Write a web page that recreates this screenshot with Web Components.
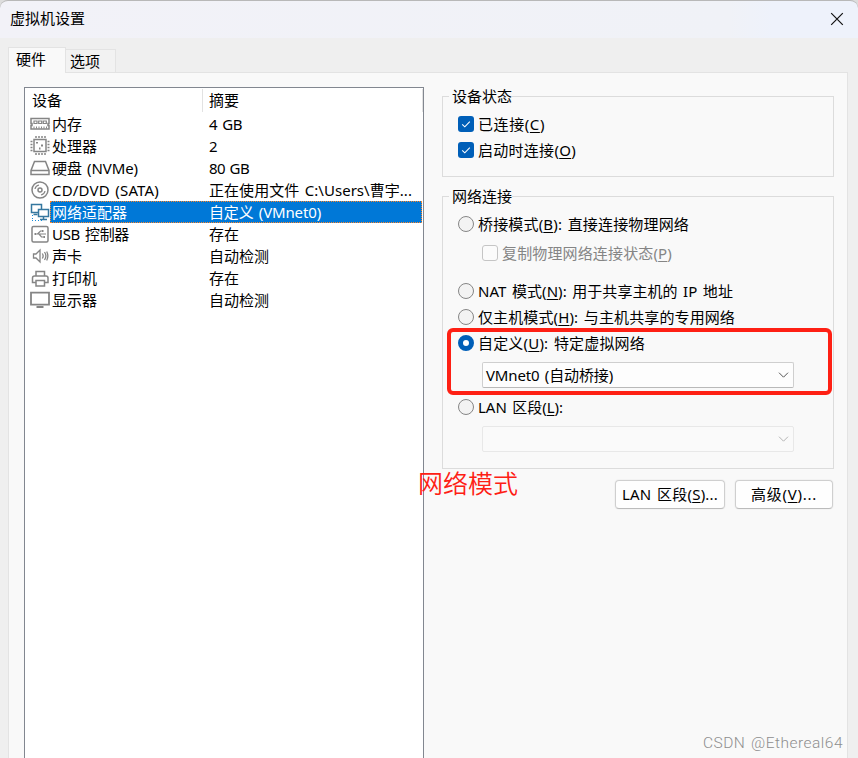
<!DOCTYPE html>
<html lang="zh-CN"><head><meta charset="utf-8"><title>虚拟机设置</title>
<style>
html,body{margin:0;width:858px;height:758px;overflow:hidden;background:#ddd}
body{font-family:"Noto Sans","Noto Sans CJK SC",sans-serif;font-size:15px;color:#000;font-weight:399}
</style></head><body>
<vm-dialog></vm-dialog>
<script>
const define=(name,html,init)=>{
  const t=document.createElement('template');t.innerHTML=html;
  customElements.define(name,class extends HTMLElement{
    connectedCallback(){
      if(this.shadowRoot)return;
      this.attachShadow({mode:'open'}).append(t.content.cloneNode(true));
      if(init)init(this,this.shadowRoot);
    }
  });
};

/* Single line of text spaced to a given width */
define('fit-text',`<style>:host{display:inline-block;justify-self:start;white-space:pre;line-height:22px;word-spacing:1.5px}</style><slot></slot>`,el=>{
  const w=+el.getAttribute('w');
  if(!w)return;
  const range=document.createRange();
  range.selectNodeContents(el);
  requestAnimationFrame(()=>{
    const nat=range.getBoundingClientRect().width;
    if(nat)el.style.letterSpacing=((w-nat)/el.textContent.length).toFixed(3)+'px';
  });
});

const glyphs={
 mem:'<path d="M1 5.500h18v5h-1v2h1v3.500H1v-3.500h1v-2H1z"/><path d="M4 8h3v2.500H4zM8.700 8h3v2.500h-3zM13.300 8h3v2.500h-3z" stroke-width="1.200"/><path d="M4 13.500v2M6.500 13.500v2M9 13.500v2M11.500 13.500v2M14 13.500v2M16.500 13.500v2" stroke-width="1"/>',
 cpu:'<rect x="4" y="4.500" width="12" height="12"/><path d="M6 1v2M9 1v2M12 1v2M15 1v2M6 18v2M9 18v2M12 18v2M15 18v2M.5 6.500h2M.5 9.500h2M.5 12.500h2M.5 15.500h2M17.500 6.500h2M17.500 9.500h2M17.500 12.500h2M17.500 15.500h2"/><path d="M7 7v1.500M12 9.500v2M9 13.500h1.500" stroke-width="2"/>',
 disk:'<path d="M4.500 4.500h11l3.500 9v4H1v-4zM1.500 13.500h17"/>',
 cd:'<circle cx="10" cy="11" r="8"/><circle cx="10" cy="11" r="2"/><path d="M5 10a5 5 0 0 1 4-4M15 12a5 5 0 0 1-4 4" stroke-width="1.200"/>',
 net:'<g stroke="#35779f"><path d="M1.500 3.500h10v8h-10zM3.500 13.500h4"/><path fill="#fff" d="M8.500 8.500h10v7h-10zM13.500 15.500v2.500M10 18.500h7"/></g><path stroke="#168bd8" stroke-width="1" stroke-dasharray="1 2" d="M2.500 14v5M2 19.500h10"/>',
 usb:'<rect x="2" y="3.500" width="16" height="15.500" rx="1.500"/><path d="M5 11h11M7.500 11l3-3h2M9 11l2.500 3H14" stroke-width="1.200"/><path d="M4.500 11h1.500M12 8h1.500M13.500 14h1.500" stroke-width="2.200"/>',
 sound:'<path d="M3.500 9h2.500l4-4v12l-4-4H3.500zM12.300 8.500q1.700 2.500 0 5M14.500 7q2.800 4 0 8M16.700 6.500q2.300 4.500 0 9" stroke-width="1.300"/>',
 print:'<path d="M6 9V4.500h8.500V9M5.500 15.500H2.500V11q0-2 2-2h11.500q2 0 2 2v4.500h-3M6 13.500h8.500v5.500H6z"/>',
 display:'<path d="M1 3.700h18v12H1zM6.500 18h7" stroke-width="1.800"/>'
};
define('vm-icon',`<style>:host{display:block;width:20px;height:22px}svg{display:block;fill:none;stroke:#858585;stroke-width:1.5}</style><svg width="20" height="22" viewBox="0 0 20 22"></svg>`,(el,r)=>{r.querySelector('svg').innerHTML=glyphs[el.getAttribute('name')]||''});

define('device-row',`<style>
:host{display:flex;height:22px;padding-left:5px}
.c{flex:1;display:grid;grid-template-columns:157px 1fr;padding-left:2px;margin-right:1px;box-sizing:border-box;height:22px}
:host([selected]) .c{background:#0078d7;color:#fff;outline:1px dotted #ff8728;outline-offset:-1px}
</style><span class="i" style="width:20px"></span><div class="c"><slot name="n"></slot><slot name="v"></slot></div>`,(el,r)=>{
 const i=document.createElement('vm-icon');i.setAttribute('name',el.getAttribute('icon'));r.querySelector('.i').append(i);
});

define('device-list',`<style>
:host{display:block;box-sizing:border-box;width:400px;height:690px;background:#fff;border:1px solid #828790}
.h{display:grid;grid-template-columns:178px 1fr;height:25px;box-sizing:border-box;padding-top:1px}
.h div{height:23px;border-right:1px solid #e2e2e2;box-sizing:border-box;padding-left:7px}
.h div+div{padding-left:6px}
</style><div class="h"><div><fit-text w="30">设备</fit-text></div><div><fit-text w="30">摘要</fit-text></div></div><slot></slot>`);

define('check-box',`<style>
:host{display:flex;align-items:center;gap:4px;height:22px}
i{width:16px;height:16px;box-sizing:border-box;border-radius:3px;background:#005fb8;display:block}
svg{display:block}
:host([disabled]){color:#858585}
:host([disabled]) i{background:#fbfbfb;border:1px solid #c5c5c5}
:host([disabled]) svg{display:none}
</style><i><svg width="16" height="16" viewBox="0 0 16 16" fill="none" stroke="#fff" stroke-width="1.1"><path d="M4.200 8.300l2.600 2.500 5-5.200"/></svg></i><slot></slot>`);

define('radio-button',`<style>
:host{display:flex;align-items:center;gap:4px;height:22px}
i{width:16px;height:16px;box-sizing:border-box;border-radius:50%;background:#f3f3f3;border:1px solid #868686}
:host([checked]) i{background:#fff;border:5px solid #005fb8}
</style><i></i><slot></slot>`);

define('group-box',`<style>
:host{display:block;box-sizing:border-box;width:392px;border:1px solid #dcdcdc}
.l{display:block;width:63px;height:22px;margin:-12px 0 0 6px;padding-left:3px;box-sizing:border-box;background:#f9f9f9}
.b{padding-left:15px}
</style><div class="l"><slot name="label"></slot></div><div class="b"><slot></slot></div>`);

define('drop-down',`<style>
:host{display:flex;align-items:center;justify-content:space-between;box-sizing:border-box;width:312px;height:26px;margin-left:24px;padding:0 4px 0 3px;border:1px solid #cfcfcf;border-bottom-color:#b9b9b9;border-radius:2px;background:#fdfdfd;color:#000}
:host([disabled]){border-color:#e8e8e8;background:#fafafa}
svg{margin-left:auto;stroke:#555;fill:none}:host([disabled]) svg{stroke:#b5b5b5}
</style><slot></slot><svg width="11" height="8" viewBox="0 0 11 8"><path d="M1 1.700l4.500 4.500L10 1.700"/></svg>`);

define('push-button',`<style>
:host{display:flex;align-items:center;justify-content:center;box-sizing:border-box;height:29px;padding-bottom:1px;background:#fefefe;border:1px solid #cfcfcf;border-bottom-color:#bbb;border-radius:4px;box-shadow:0 0 0 1px #f3f3f3}
</style><slot></slot>`);

define('title-bar',`<style>
:host{display:flex;justify-content:space-between;box-sizing:border-box;height:38px;padding:6px 14px 0 10px;border-top:1px solid #b8b8b8;border-radius:8px 8px 0 0;background:linear-gradient(90deg,#f2f2f8 0,#f0f2f7 85%,#eef2fb 90%)}
svg{margin-top:5px}
</style><slot></slot><svg width="14" height="14" viewBox="0 0 14 14" stroke="#111" stroke-width="1.200"><path d="M1.200 1.200l11.600 11.600M12.800 1.200L1.200 12.800"/></svg>`);

define('tab-strip',`<style>
:host{display:flex;align-items:flex-end;height:34px;padding-left:8px;position:relative}
div{box-sizing:border-box;border:1px solid #e3e3e3;border-bottom:0}
.a{width:58px;height:26px;background:#f9f9f9;padding-left:7px;margin-bottom:-1px;z-index:1;position:relative}
.b{width:50px;height:23px;background:#f2f2f2;padding-left:4px;border-left:0}
</style><div class="a"><slot name="a"></slot></div><div class="b"><slot name="b"></slot></div>`);

define('vm-dialog',`<style>
:host{display:block;width:858px;height:758px;overflow:hidden;position:relative;background:linear-gradient(#ddd 0 20px,#efefef 20px)}
u{text-underline-offset:2px;text-decoration-thickness:1px}
.p{display:flex;gap:18px;align-items:flex-start;box-sizing:border-box;width:840px;height:700px;margin-left:8px;padding:14px 0 0 15px;background:#f9f9f9;border:1px solid #e3e3e3}
.r{padding-top:9px}
.btn{display:flex;justify-content:flex-end;gap:10px;margin:11px 1px 0 0}
.mark{position:absolute;left:447px;top:328px;width:385px;height:67px;box-sizing:border-box;border:4px solid #fe2014;border-radius:6px}
.note{position:absolute;left:418px;top:472px;color:#fe2014;font-size:25px;font-weight:350}
.wm{position:absolute;left:703px;top:732px;color:#8e8e8e;font:300 15.500px "Roboto",sans-serif;line-height:22px}
</style>
<title-bar><fit-text w="75">虚拟机设置</fit-text></title-bar>
<tab-strip><fit-text slot="a" w="30">硬件</fit-text><fit-text slot="b" w="30">选项</fit-text></tab-strip>
<div class="p">
<device-list>
<device-row icon="mem"><fit-text slot="n" w="30">内存</fit-text><fit-text slot="v" w="33">4 GB</fit-text></device-row>
<device-row icon="cpu"><fit-text slot="n" w="45">处理器</fit-text><fit-text slot="v">2</fit-text></device-row>
<device-row icon="disk"><fit-text slot="n" w="86">硬盘 (NVMe)</fit-text><fit-text slot="v" w="40">80 GB</fit-text></device-row>
<device-row icon="cd"><fit-text slot="n" w="107">CD/DVD (SATA)</fit-text><fit-text slot="v" w="203">正在使用文件 C:\\Users\\曹宇...</fit-text></device-row>
<device-row icon="net" selected><fit-text slot="n" w="75">网络适配器</fit-text><fit-text slot="v" w="112">自定义 (VMnet0)</fit-text></device-row>
<device-row icon="usb"><fit-text slot="n" w="77">USB 控制器</fit-text><fit-text slot="v" w="30">存在</fit-text></device-row>
<device-row icon="sound"><fit-text slot="n" w="30">声卡</fit-text><fit-text slot="v" w="60">自动检测</fit-text></device-row>
<device-row icon="print"><fit-text slot="n" w="45">打印机</fit-text><fit-text slot="v" w="30">存在</fit-text></device-row>
<device-row icon="display"><fit-text slot="n" w="45">显示器</fit-text><fit-text slot="v" w="60">自动检测</fit-text></device-row>
</device-list>
<div class="r">
<group-box style="height:81px"><fit-text slot="label" w="60">设备状态</fit-text>
<check-box style="margin-top:6px"><fit-text w="67">已连接(<u>C</u>)</fit-text></check-box>
<check-box style="margin-top:4px"><fit-text w="98">启动时连接(<u>O</u>)</fit-text></check-box></group-box>
<group-box style="height:273px;margin-top:19px"><fit-text slot="label" w="60">网络连接</fit-text>
<radio-button style="margin-top:6px"><fit-text w="211">桥接模式(<u>B</u>): 直接连接物理网络</fit-text></radio-button>
<check-box disabled style="margin:7px 0 0 24px"><fit-text w="170">复制物理网络连接状态(<u>P</u>)</fit-text></check-box>
<radio-button style="margin-top:16px"><fit-text w="255">NAT 模式(<u>N</u>): 用于共享主机的 IP 地址</fit-text></radio-button>
<radio-button style="margin-top:4px"><fit-text w="257">仅主机模式(<u>H</u>): 与主机共享的专用网络</fit-text></radio-button>
<radio-button checked style="margin-top:4px"><fit-text w="167">自定义(<u>U</u>): 特定虚拟网络</fit-text></radio-button>
<drop-down style="margin-top:8px"><fit-text w="127">VMnet0 (自动桥接)</fit-text></drop-down>
<radio-button style="margin-top:8px"><fit-text w="85">LAN 区段(<u>L</u>):</fit-text></radio-button>
<drop-down disabled style="margin-top:8px"></drop-down></group-box>
<div class="btn"><push-button style="width:110px"><fit-text w="96">LAN 区段(<u>S</u>)...</fit-text></push-button><push-button style="width:98px"><fit-text w="66">高级(<u>V</u>)...</fit-text></push-button></div>
</div></div>
<div class="mark"></div>
<fit-text class="note" w="100">网络模式</fit-text>
<fit-text class="wm" w="140">CSDN @Ethereal64</fit-text>`);
</script></body></html>
